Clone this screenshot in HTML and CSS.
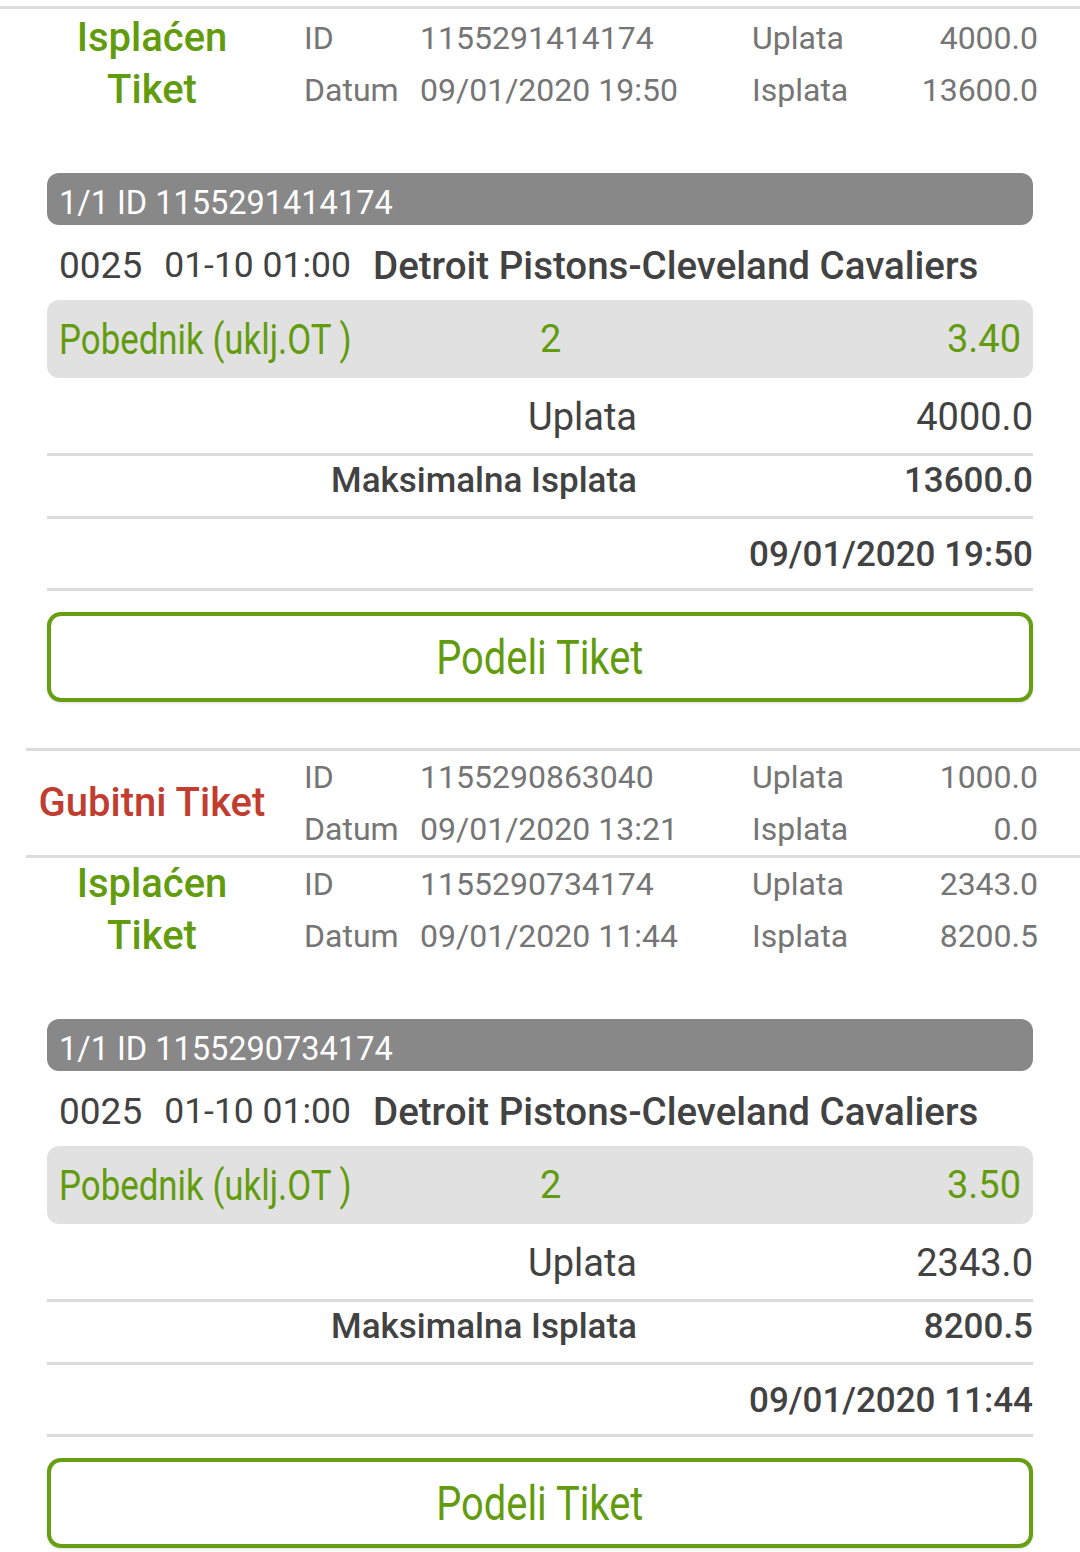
FILE: index.html
```html
<!DOCTYPE html>
<html lang="sr">
<head>
    <meta charset="UTF-8">
    <meta name="viewport" content="width=device-width, initial-scale=1.0">
    <title>Moji tiketi</title>
    <link rel="stylesheet" href="styles.css">
</head>
<body>
    <div class="lista">

        <!-- Tiket 1 (otvoren) -->
        <div class="tiket tiket-prvi">
            <div class="zaglavlje">
                <div class="status isplacen">Isplaćen<br>Tiket</div>
                <span class="oznaka">ID</span>
                <span class="vrednost">1155291414174</span>
                <span class="oznaka">Uplata</span>
                <span class="iznos">4000.0</span>
                <span class="oznaka">Datum</span>
                <span class="vrednost">09/01/2020 19:50</span>
                <span class="oznaka">Isplata</span>
                <span class="iznos">13600.0</span>
            </div>

            <div class="detalji">
                <div class="traka-id">1/1 ID 1155291414174</div>
                <div class="mec">
                    <span class="sifra">0025</span>
                    <span class="vreme">01-10 01:00</span>
                    <span class="timovi">Detroit Pistons-Cleveland Cavaliers</span>
                </div>
                <div class="kvota-red">
                    <span class="igra"><span class="uzak">Pobednik (uklj.OT )</span></span>
                    <span class="tip">2</span>
                    <span class="kvota">3.40</span>
                </div>
                <div class="sumarni red-uplata">
                    <span class="sum-naziv">Uplata</span>
                    <span class="sum-vrednost">4000.0</span>
                </div>
                <div class="sumarni red-maks">
                    <span class="sum-naziv">Maksimalna Isplata</span>
                    <span class="sum-vrednost">13600.0</span>
                </div>
                <div class="sumarni red-datum">
                    <span class="sum-naziv"></span>
                    <span class="sum-vrednost">09/01/2020 19:50</span>
                </div>
                <button class="dugme-podeli"><span class="uzak">Podeli Tiket</span></button>
            </div>
        </div>

        <!-- Tiket 2 (zatvoren) -->
        <div class="tiket">
            <div class="zaglavlje">
                <div class="status gubitni">Gubitni Tiket</div>
                <span class="oznaka">ID</span>
                <span class="vrednost">1155290863040</span>
                <span class="oznaka">Uplata</span>
                <span class="iznos">1000.0</span>
                <span class="oznaka">Datum</span>
                <span class="vrednost">09/01/2020 13:21</span>
                <span class="oznaka">Isplata</span>
                <span class="iznos">0.0</span>
            </div>
        </div>

        <!-- Tiket 3 (otvoren) -->
        <div class="tiket">
            <div class="zaglavlje">
                <div class="status isplacen">Isplaćen<br>Tiket</div>
                <span class="oznaka">ID</span>
                <span class="vrednost">1155290734174</span>
                <span class="oznaka">Uplata</span>
                <span class="iznos">2343.0</span>
                <span class="oznaka">Datum</span>
                <span class="vrednost">09/01/2020 11:44</span>
                <span class="oznaka">Isplata</span>
                <span class="iznos">8200.5</span>
            </div>

            <div class="detalji">
                <div class="traka-id">1/1 ID 1155290734174</div>
                <div class="mec">
                    <span class="sifra">0025</span>
                    <span class="vreme">01-10 01:00</span>
                    <span class="timovi">Detroit Pistons-Cleveland Cavaliers</span>
                </div>
                <div class="kvota-red">
                    <span class="igra"><span class="uzak">Pobednik (uklj.OT )</span></span>
                    <span class="tip">2</span>
                    <span class="kvota">3.50</span>
                </div>
                <div class="sumarni red-uplata">
                    <span class="sum-naziv">Uplata</span>
                    <span class="sum-vrednost">2343.0</span>
                </div>
                <div class="sumarni red-maks">
                    <span class="sum-naziv">Maksimalna Isplata</span>
                    <span class="sum-vrednost">8200.5</span>
                </div>
                <div class="sumarni red-datum">
                    <span class="sum-naziv"></span>
                    <span class="sum-vrednost">09/01/2020 11:44</span>
                </div>
                <button class="dugme-podeli"><span class="uzak">Podeli Tiket</span></button>
            </div>
        </div>

    </div>
</body>
</html>
```

FILE: styles.css
```css
/* Osnovno */
body {
    font-family: Roboto, "Noto Sans", sans-serif;
    margin: 0;
    padding: 0;
    background-color: #fff;
    color: #444;
}

.lista {
    padding-top: 6px;
}

/* Linija iznad svakog tiketa */
.tiket::before {
    content: "";
    display: block;
    height: 3px;
    margin-left: 26px;
    background-color: #dcdcdc;
}

.tiket-prvi::before {
    margin-left: 0;
}

/* Zaglavlje tiketa: status + ID/datum/uplata/isplata */
.zaglavlje {
    display: grid;
    grid-template-columns: 304px 116px 332px 140px 1fr;
    grid-auto-rows: 52px;
    align-items: center;
    padding-right: 42px;
    font-size: 32px;
    color: #757575;
}

.tiket-prvi .zaglavlje {
    padding-top: 3px;
}

.status {
    grid-row: span 2;
    text-align: center;
    font-size: 40px;
    font-weight: 500;
    line-height: 52px;
}

.isplacen {
    color: #629c0e;
}

.gubitni {
    color: #c13d2f;
}

.iznos {
    text-align: right;
}

/* Detalji otvorenog tiketa */
.detalji {
    padding: 0 47px 46px;
    margin-top: 57px;
}

.traka-id {
    background-color: #888;
    color: #fff;
    border-radius: 12px;
    height: 52px;
    box-sizing: border-box;
    padding: 9px 12px 0;
    line-height: 43px;
    font-size: 32.5px;
}

.mec {
    display: flex;
    align-items: center;
    gap: 22px;
    height: 75px;
    box-sizing: border-box;
    padding: 5px 12px 0;
    font-size: 37px;
    color: #424242;
    white-space: nowrap;
}

.mec .vreme {
    font-size: 35.5px;
}

.mec .timovi {
    font-size: 38.5px;
    font-weight: 500;
}

.kvota-red {
    display: grid;
    grid-template-columns: 481px 1fr auto;
    align-items: center;
    height: 78px;
    padding: 0 12px;
    background-color: #e1e1e1;
    border-radius: 12px;
    color: #629c0e;
    font-size: 38px;
}

.uzak {
    display: inline-block;
    transform: scaleX(.83);
    transform-origin: left center;
    white-space: nowrap;
}

.igra {
    font-size: 42px;
}

/* Uplata / Maksimalna isplata / datum */
.sumarni {
    display: grid;
    grid-template-columns: 590px 1fr;
    border-bottom: 3px solid #dcdcdc;
    color: #424242;
}

.sumarni .sum-naziv,
.sumarni .sum-vrednost {
    text-align: right;
}

.red-uplata {
    padding-top: 4px;
    line-height: 71px;
    font-size: 38px;
}

.red-maks {
    padding-bottom: 10px;
    line-height: 50px;
    font-size: 35px;
    font-weight: 500;
}

.red-datum {
    padding-top: 2px;
    line-height: 67px;
    font-size: 35px;
    font-weight: 500;
}

/* Dugme za deljenje */
.dugme-podeli {
    display: block;
    width: 100%;
    height: 90px;
    margin-top: 21px;
    padding: 0;
    background-color: #fff;
    border: 4px solid #679e12;
    border-radius: 14px;
    box-shadow: 0 1px 3px rgba(0,0,0,.15);
    font-family: Roboto, sans-serif;
    font-size: 48px;
    color: #629c0e;
    cursor: pointer;
}

.dugme-podeli .uzak {
    transform: scaleX(.83);
    transform-origin: center;
}
```
